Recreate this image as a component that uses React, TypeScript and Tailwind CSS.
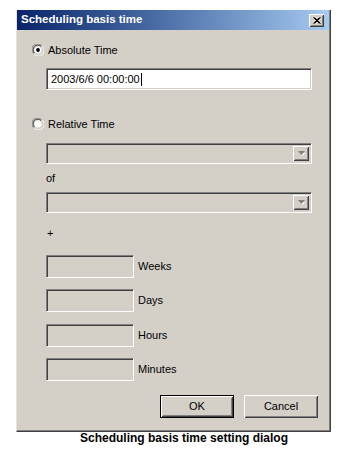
const font = { fontFamily: '"Liberation Sans", Arial, sans-serif' };

const sunken =
  'border border-t-[#808080] border-l-[#808080] border-r-white border-b-white shadow-[inset_1px_1px_0_#404040,inset_-1px_-1px_0_#d4d0c8]';

const raised =
  'shadow-[inset_1px_1px_0_#ffffff,inset_-1px_-1px_0_#404040,inset_2px_2px_0_#d4d0c8,inset_-2px_-2px_0_#808080]';

const Radio = ({ checked }: { checked?: boolean }) => (
  <svg width="12" height="12" viewBox="0 0 12 12" className="shrink-0">
    <path d="M1.5 9.5 A5.5 5.5 0 0 1 9.5 1.5" fill="none" stroke="#808080" />
    <path d="M2.5 9 A4.5 4.5 0 0 1 9 2.5" fill="none" stroke="#404040" />
    <path d="M10.5 2.5 A5.5 5.5 0 0 1 2.5 10.5" fill="none" stroke="#ffffff" />
    <path d="M9.5 3 A4.5 4.5 0 0 1 3 9.5" fill="none" stroke="#d4d0c8" />
    <circle cx="6" cy="6" r="3.6" fill="#ffffff" />
    {checked && <circle cx="6" cy="6" r="1.9" fill="#000000" />}
  </svg>
);

const Combo = () => (
  <div className={`${sunken} ml-[14px] flex h-[21px] w-[266px] justify-end bg-[#d4d0c8] p-[2px]`}>
    <div className={`${raised} flex w-[16px] items-center justify-center bg-[#d4d0c8]`}>
      <svg width="7" height="5" viewBox="0 0 7 5">
        <path d="M1 1 H6 L3.5 4 Z" fill="#ffffff" transform="translate(1 1)" />
        <path d="M0 0 H7 L3.5 4 Z" fill="#808080" />
      </svg>
    </div>
  </div>
);

const Field = ({ label, className = '' }: { label: string; className?: string }) => (
  <div className={`ml-[14px] flex items-center ${className}`}>
    <div className={`${sunken} h-[23px] w-[88px] bg-[#d4d0c8]`} />
    <span className="ml-[4px]">{label}</span>
  </div>
);

export default function App() {
  return (
    <div className="min-h-screen bg-white pl-[16px] pt-[10px] text-[11px] text-black" style={font}>
      <div className="flex h-[422px] w-[315px] flex-col border-b border-l border-r border-b-[#404040] border-l-[#e4e2dc] border-r-[#404040] bg-[#d4d0c8] shadow-[inset_-1px_-1px_0_#808080]">
        {/* title bar */}
        <div className="mr-[1px] flex h-[20px] items-center justify-between bg-gradient-to-r from-[#0a246a] to-[#a6caf0] pl-[4px] pr-[5px]">
          <span className="text-[11.5px] font-bold text-white">Scheduling basis time</span>
          <div className={`${raised} flex h-[13px] w-[15px] items-center justify-center bg-[#d4d0c8]`}>
            <svg width="8" height="7" viewBox="0 0 8 7">
              <path d="M0.5 0.5 L6.5 6.5 M1.5 0.5 L7.5 6.5 M6.5 0.5 L0.5 6.5 M7.5 0.5 L1.5 6.5" stroke="#000" strokeWidth="1" />
            </svg>
          </div>
        </div>

        {/* body */}
        <div className="flex flex-col pl-[15px]">
          <div className="mt-[14px] flex h-[12px] items-center gap-[4px]">
            <Radio checked />
            <span>Absolute Time</span>
          </div>
          <div className={`${sunken} ml-[14px] mt-[12px] flex h-[22px] w-[266px] items-center bg-white pl-[4px]`}>
            <span>2003/6/6 00:00:00</span>
            <span className="ml-[1px] h-[13px] w-[1px] bg-black" />
          </div>

          <div className="mt-[28px] flex h-[12px] items-center gap-[4px]">
            <Radio />
            <span>Relative Time</span>
          </div>
          <div className="mt-[13px]">
            <Combo />
          </div>
          <div className="ml-[14px] mt-[7px] h-[14px] leading-[14px]">of</div>
          <div className="mt-[7px]">
            <Combo />
          </div>
          <div className="ml-[15px] mt-[13px] h-[14px] leading-[14px]">+</div>

          <Field label="Weeks" className="mt-[15px]" />
          <Field label="Days" className="mt-[11px]" />
          <Field label="Hours" className="mt-[12px]" />
          <Field label="Minutes" className="mt-[11px]" />

          <div className="mt-[14px] flex justify-end gap-[10px] pr-[12px]">
            <div className="h-[23px] w-[74px] border border-black">
              <div className={`${raised} flex h-full items-center justify-center bg-[#d4d0c8]`}>OK</div>
            </div>
            <div className={`${raised} flex h-[23px] w-[74px] items-center justify-center bg-[#d4d0c8]`}>Cancel</div>
          </div>
        </div>
      </div>

      <div className="pl-[64px] text-[12px] font-bold leading-[13px]">Scheduling basis time setting dialog</div>
    </div>
  );
}
